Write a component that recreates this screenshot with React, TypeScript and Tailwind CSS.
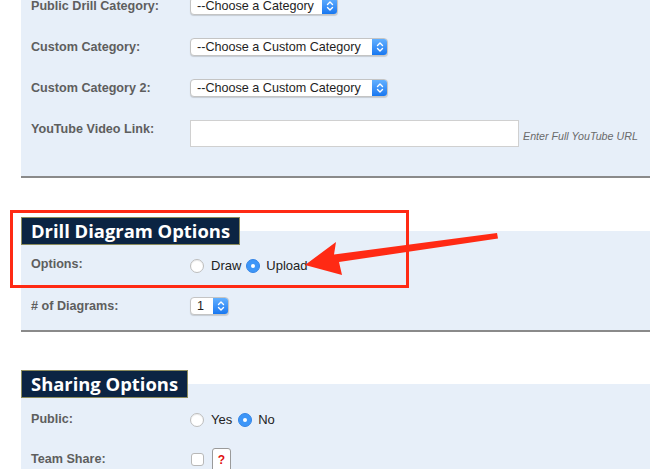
import React from 'react';

const Select = ({ text, width }: { text: string; width: string }) => (
  <div
    className={`${width} h-[18px] flex items-stretch bg-white rounded-[4px] border border-[#c4c4c4] shadow-[0_1px_1px_rgba(0,0,0,0.15)] overflow-hidden`}
  >
    <div className="flex-1 pl-[6px] text-[12.6px] leading-[16px] text-[#1e1e1e] whitespace-nowrap overflow-hidden">{text}</div>
    <div className="w-[15px] flex items-center justify-center bg-gradient-to-b from-[#62b0ff] to-[#1677f0]">
      <svg width="8" height="12" viewBox="0 0 8 12" fill="none" stroke="white" strokeWidth="1.4" strokeLinecap="round" strokeLinejoin="round">
        <path d="M1.5 4.5 L4 2 L6.5 4.5" />
        <path d="M1.5 7.5 L4 10 L6.5 7.5" />
      </svg>
    </div>
  </div>
);

const Radio = ({ checked }: { checked?: boolean }) =>
  checked ? (
    <div className="w-[14px] h-[14px] rounded-full bg-[#3d96f8] border border-[#3585e6] flex items-center justify-center">
      <div className="w-[4px] h-[4px] rounded-full bg-white" />
    </div>
  ) : (
    <div className="w-[14px] h-[14px] rounded-full bg-white border border-[#bdbdbd] shadow-[inset_0_1px_1px_rgba(0,0,0,0.08)]" />
  );

const Label = ({ children }: { children: React.ReactNode }) => (
  <div className="w-[159px] shrink-0 text-[12.6px] font-bold text-[#5e5e5e]">{children}</div>
);

const Header = ({ children }: { children: React.ReactNode }) => (
  <div className="relative z-10 inline-block h-[28px] px-[9px] bg-[#0b2443] border border-[#8b8b5c] text-white text-[18.4px] font-bold leading-[25px] font-['Open_Sans',sans-serif]">
    {children}
  </div>
);

const App = () => {
  return (
    <div className="relative w-[650px] h-[469px] overflow-hidden bg-white font-['Liberation_Sans',Arial,sans-serif]">
      <div className="pl-[21px]">
        {/* Category panel */}
        <div className="-mt-[3px] bg-[#e7eff9] border-b-2 border-[#8a8a8a] pl-[10px] pb-[29px] flex flex-col gap-[23px]">
          <div className="flex items-center h-[18px]">
            <Label>Public Drill Category:</Label>
            <Select text="--Choose a Category" width="w-[148px]" />
          </div>
          <div className="flex items-center h-[18px]">
            <Label>Custom Category:</Label>
            <Select text="--Choose a Custom Category" width="w-[198px]" />
          </div>
          <div className="flex items-center h-[18px]">
            <Label>Custom Category 2:</Label>
            <Select text="--Choose a Custom Category" width="w-[198px]" />
          </div>
          <div className="flex items-start">
            <div className="leading-[18px]">
              <Label>YouTube Video Link:</Label>
            </div>
            <div className="w-[329px] h-[27px] bg-white border border-[#d0d0d0]" />
            <div className="ml-[4px] mt-[8px] text-[10.7px] italic text-[#6a6a6a] whitespace-nowrap">Enter Full YouTube URL</div>
          </div>
        </div>

        {/* Drill Diagram Options */}
        <div className="mt-[39px]">
          <Header>Drill Diagram Options</Header>
          <div className="-mt-[14px] bg-[#e7eff9] border-b-2 border-[#8a8a8a] pl-[10px] pt-[26px] pb-[15px] flex flex-col gap-[22px]">
            <div className="flex items-center h-[18px]">
              <div className="-mt-[4px]">
                <Label>Options:</Label>
              </div>
              <div className="flex items-center text-[13px] text-[#222]">
                <Radio />
                <span className="ml-[7px] mr-[5px]">Draw</span>
                <Radio checked />
                <span className="ml-[6px]">Upload</span>
              </div>
            </div>
            <div className="flex items-center h-[18px]">
              <Label># of Diagrams:</Label>
              <Select text="1" width="w-[39px]" />
            </div>
          </div>
        </div>

        {/* Sharing Options */}
        <div className="mt-[38px]">
          <Header>Sharing Options</Header>
          <div className="-mt-[14px] bg-[#e7eff9] pl-[10px] pt-[27px] pb-[10px] flex flex-col gap-[18px]">
            <div className="flex items-center h-[18px]">
              <div className="-mt-[2px]">
                <Label>Public:</Label>
              </div>
              <div className="flex items-center text-[13px] text-[#222]">
                <Radio />
                <span className="ml-[7px] mr-[6px]">Yes</span>
                <Radio checked />
                <span className="ml-[6px]">No</span>
              </div>
            </div>
            <div className="flex items-center h-[24px]">
              <Label>Team Share:</Label>
              <div className="ml-[1px] w-[13px] h-[13px] bg-white border border-[#b8b8b8] rounded-[3px]" />
              <div className="ml-[8px] w-[19px] h-[26px] mt-[4px] bg-white border border-[#9a9a9a] rounded-[3px] flex items-start justify-center pt-[5px]">
                <span className="text-[12px] font-bold text-[#e01010] leading-none">?</span>
              </div>
            </div>
          </div>
        </div>
      </div>

      {/* Annotation: red box and arrow */}
      <div className="absolute left-[10px] top-[210px] w-[399px] h-[78px] border-[3px] border-[#ff2a14]" />
      <svg className="absolute left-0 top-0" width="650" height="469" viewBox="0 0 650 469">
        <polygon
          points="305,265 336,242 334,254.5 497,233 498,238.5 339,262 342,275"
          fill="#ff2a14"
        />
      </svg>
    </div>
  );
};

export default App;
